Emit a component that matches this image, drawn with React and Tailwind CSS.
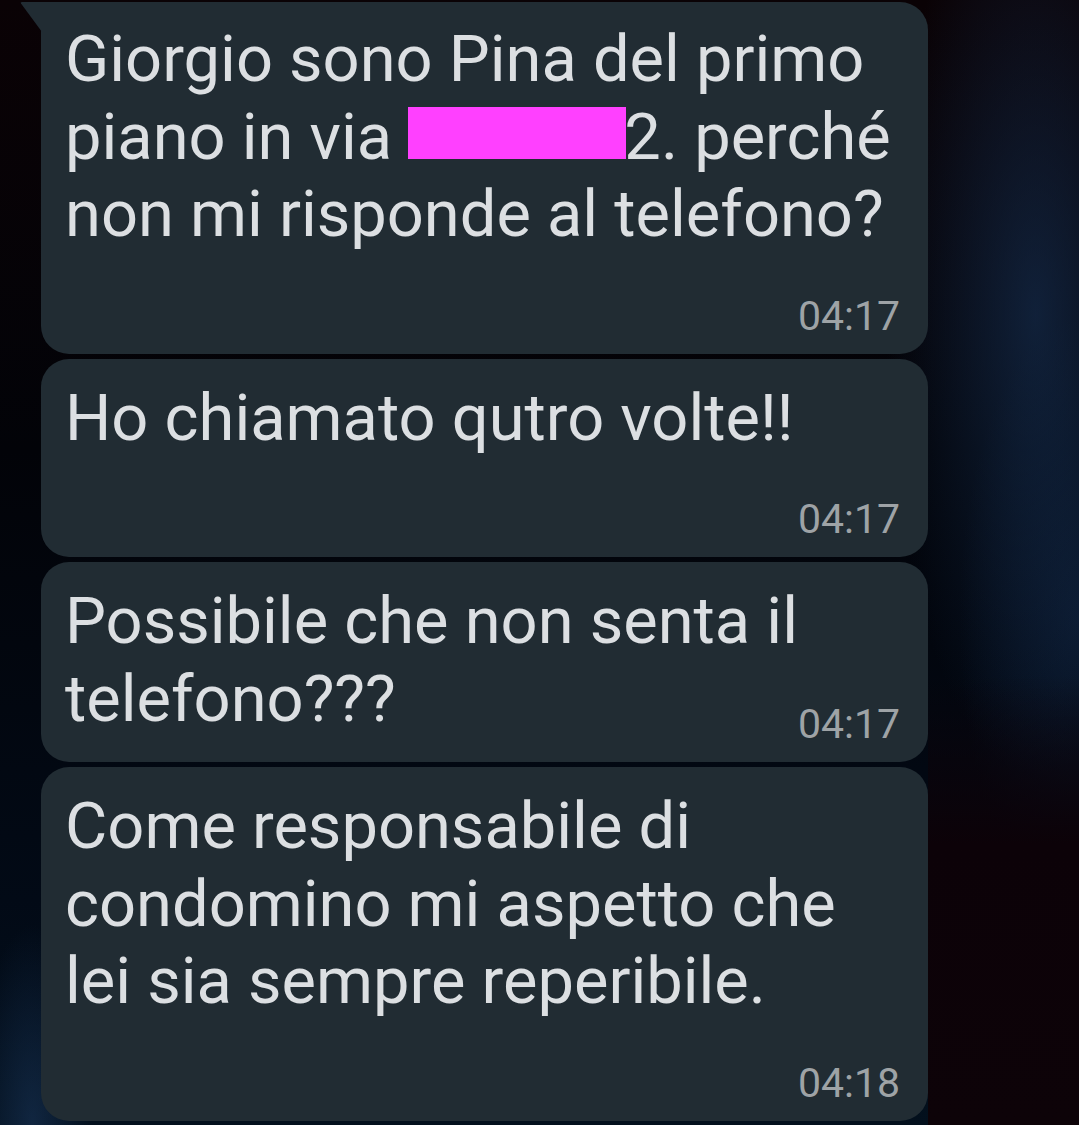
import React from "react";

const messages = [
	{
		lines: [
			"Giorgio sono Pina del primo",
			"redacted",
			"non mi risponde al telefono?",
		],
		time: "04:17",
		first: true,
	},
	{ lines: ["Ho chiamato qutro volte!!"], time: "04:17" },
	{ lines: ["Possibile che non senta il", "telefono???"], time: "04:17", inline: true },
	{
		lines: [
			"Come responsabile di",
			"condomino mi aspetto che",
			"lei sia sempre reperibile.",
		],
		time: "04:18",
	},
];

const Line = ({ text }) => {
	if (text === "redacted") {
		return (
			<div className="whitespace-nowrap">
				piano in via{" "}
				<span className="inline-block h-[52px] w-[218px] bg-[#ff40ff] align-baseline"></span>
				<span className="-ml-[2px]">2. perché</span>
			</div>
		);
	}
	return <div className="whitespace-nowrap">{text}</div>;
};

const Bubble = ({ msg }) => {
	const time = (
		<span className="block shrink-0 text-[41px] leading-[50px] text-[#9ea3a6]">{msg.time}</span>
	);
	return (
		<div
			className={`relative w-[887px] bg-[#212c33] pl-[24px] pr-[28px] pb-[13px] ${
				msg.first ? "rounded-[28px] rounded-tl-none pt-[19px]" : "rounded-[28px] pt-[21px]"
			}`}>
			{msg.first && (
				<svg
					className="absolute left-[-21px] top-0"
					width="22"
					height="30"
					viewBox="0 0 22 30">
					<path d="M1 1.5 Q0 0 2 0 L22 0 L22 30 Z" fill="#212c33" />
				</svg>
			)}
			{msg.inline ? (
				<div className="flex items-end">
					<div className="pb-[11px]">
						{msg.lines.map((l, i) => (
							<Line key={i} text={l} />
						))}
					</div>
					<div className="ml-auto">{time}</div>
				</div>
			) : (
				<>
					<div>
						{msg.lines.map((l, i) => (
							<Line key={i} text={l} />
						))}
					</div>
					<div className="mt-[37px] flex justify-end">{time}</div>
				</>
			)}
		</div>
	);
};

export default function App() {
	return (
		<div
			className="h-[1125px] w-full overflow-hidden bg-[radial-gradient(ellipse_150px_460px_at_96%_28%,rgba(24,52,90,0.6),transparent),radial-gradient(ellipse_120px_300px_at_100%_55%,rgba(20,45,80,0.45),transparent),radial-gradient(ellipse_60px_200px_at_3%_100%,rgba(30,60,100,0.5),transparent),linear-gradient(180deg,#0a0205_0%,#020308_40%,#020a16_80%,#03101d_100%)]"
			style={{ fontFamily: "Roboto, 'Noto Sans', sans-serif" }}>
			<div className="relative h-full">
				<div className="absolute inset-y-0 right-0 w-[151px] bg-[linear-gradient(180deg,transparent_0%,transparent_60%,#0c0208_75%,#0d0308_100%)]"></div>
				<div className="relative flex flex-col gap-[5px] pl-[41px] pt-[2px] text-[65px] leading-[77.5px] text-[#dcdfe2]">
					{messages.map((m, i) => (
						<Bubble key={i} msg={m} />
					))}
				</div>
			</div>
		</div>
	);
}
